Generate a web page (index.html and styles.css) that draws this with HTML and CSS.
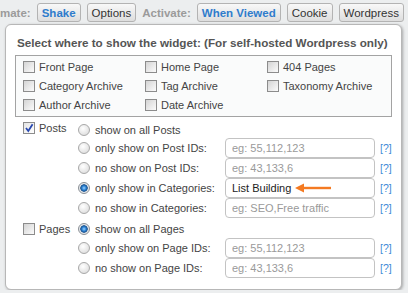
FILE: index.html
```html
<!DOCTYPE html>
<html lang="en">
<head>
  <meta charset="UTF-8">
  <title>Widget Display Rules</title>
  <link rel="stylesheet" href="styles.css">
</head>
<body>

<div class="toolbar">
  <span class="tb-label">mate:</span>
  <button class="tb-btn on">Shake</button>
  <button class="tb-btn">Options</button>
  <span class="tb-label">Activate:</span>
  <button class="tb-btn on">When Viewed</button>
  <button class="tb-btn">Cookie</button>
  <button class="tb-btn">Wordpress</button>
</div>

<div class="panel">
  <h3 class="panel-title">Select where to show the widget: (For self-hosted Wordpress only)</h3>

  <div class="page-types">
    <label class="check-item"><span class="cb"></span>Front Page</label>
    <label class="check-item"><span class="cb"></span>Home Page</label>
    <label class="check-item"><span class="cb"></span>404 Pages</label>
    <label class="check-item"><span class="cb"></span>Category Archive</label>
    <label class="check-item"><span class="cb"></span>Tag Archive</label>
    <label class="check-item"><span class="cb"></span>Taxonomy Archive</label>
    <label class="check-item"><span class="cb"></span>Author Archive</label>
    <label class="check-item"><span class="cb"></span>Date Archive</label>
  </div>

  <div class="rules rules-posts">
    <label class="rule-toggle">
      <span class="cb checked">
        <svg width="10" height="10" viewBox="0 0 10 10"><path d="M2 5 L4.3 8 L8.6 1.2" fill="none" stroke="#2848b0" stroke-width="1.8"/></svg>
      </span>Posts
    </label>
    <label class="radio-item"><span class="rb"></span>show on all Posts</label>

    <label class="radio-item"><span class="rb"></span>only show on Post IDs:</label>
    <div class="field"><input type="text" placeholder="eg: 55,112,123"></div>
    <a class="help">[?]</a>

    <label class="radio-item"><span class="rb"></span>no show on Post IDs:</label>
    <div class="field"><input type="text" placeholder="eg: 43,133,6"></div>
    <a class="help">[?]</a>

    <label class="radio-item"><span class="rb on"></span>only show in Categories:</label>
    <div class="field">
      <input type="text" value="List Building">
      <svg class="arrow" width="36" height="10" viewBox="0 0 36 10">
        <polygon points="0,5 9,0.5 9,9.5" fill="#f47a22"/>
        <rect x="8" y="3.8" width="28" height="2.4" fill="#f47a22"/>
      </svg>
    </div>
    <a class="help">[?]</a>

    <label class="radio-item"><span class="rb"></span>no show in Categories:</label>
    <div class="field"><input type="text" placeholder="eg: SEO,Free traffic"></div>
    <a class="help">[?]</a>
  </div>

  <div class="rules rules-pages">
    <label class="rule-toggle"><span class="cb"></span>Pages</label>
    <label class="radio-item"><span class="rb on"></span>show on all Pages</label>

    <label class="radio-item"><span class="rb"></span>only show on Page IDs:</label>
    <div class="field"><input type="text" placeholder="eg: 55,112,123"></div>
    <a class="help">[?]</a>

    <label class="radio-item"><span class="rb"></span>no show on Page IDs:</label>
    <div class="field"><input type="text" placeholder="eg: 43,133,6"></div>
    <a class="help">[?]</a>
  </div>
</div>

</body>
</html>
```

FILE: styles.css
```css
* {
  box-sizing: border-box;
}
body {
  margin: 0;
  background-color: #eceeef;
  font-family: "Liberation Sans", Arial, sans-serif;
  font-size: 11px;
  color: #444;
  overflow: hidden;
}
.toolbar {
  display: flex;
  align-items: center;
  gap: 6px;
  height: 24px;
  padding: 3px 0 2px;
}
.tb-label {
  font-size: 11.5px;
  font-weight: bold;
  color: #9b9b9b;
}
.tb-btn {
  height: 19px;
  padding: 0 4px;
  border: 1px solid #b3b3b3;
  border-radius: 3px;
  background: linear-gradient(#f8f8f8, #dedede);
  font-family: "Liberation Sans", Arial, sans-serif;
  font-size: 11.5px;
  color: #333;
}
.tb-btn.on {
  color: #2f7ccc;
  font-weight: bold;
}
.panel {
  width: 397px;
  height: 266px;
  margin-left: 5px;
  padding: 11px 9px 0;
  background-color: #fff;
  border: 1px solid #b7b7b7;
  border-radius: 6px;
  box-shadow: 1px 1px 3px rgba(0, 0, 0, 0.3);
}
.panel-title {
  margin: 0 0 5px 2px;
  font-size: 11.7px;
  line-height: 14px;
  font-weight: bold;
  color: #555;
}
.page-types {
  display: grid;
  grid-template-columns: repeat(3, 122px);
  grid-auto-rows: 19px;
  padding: 1px 0 2px 7px;
  border: 1px solid #a3a3a3;
  background-color: #fafbfb;
}
.check-item,
.rule-toggle {
  display: flex;
  align-items: center;
  gap: 4px;
}
.cb {
  flex: none;
  width: 12px;
  height: 12px;
  border: 1px solid #8c8c8c;
  background: linear-gradient(135deg, #d4d4d4, #fbfbfb);
  display: flex;
  align-items: center;
  justify-content: center;
}
.cb.checked {
  background: linear-gradient(135deg, #e4e4e4, #ffffff);
}
.rules {
  display: grid;
  grid-template-columns: 55px 147px 150px auto;
  align-items: center;
  padding-left: 8px;
}
.rules-posts {
  margin-top: 4px;
  grid-template-rows: 17px repeat(4, 20px);
}
.rules-posts .rule-toggle {
  align-self: start;
  margin-top: 1px;
}
.rules-pages {
  margin-top: 2px;
  grid-template-rows: 18px repeat(2, 20px);
}
.radio-item {
  grid-column: 2;
  display: flex;
  align-items: center;
  gap: 5px;
}
.rb {
  flex: none;
  width: 12px;
  height: 12px;
  border-radius: 50%;
  border: 1px solid #a8a8a8;
  background: radial-gradient(circle at 40% 35%, #ffffff, #d6d6d6);
}
.rb.on {
  border-color: #8a8f95;
  background: radial-gradient(circle at 50% 50%, #9fd4ff 0, #2c84d6 2px, #174f8c 3.4px, #dfe3e7 4px, #f0f0f0 6px);
}
.field {
  grid-column: 3;
  position: relative;
  height: 20px;
}
.field input {
  width: 150px;
  height: 20px;
  padding: 0 6px;
  border: 1px solid #c3c3c3;
  border-radius: 4px;
  font-family: "Liberation Sans", Arial, sans-serif;
  font-size: 11px;
  color: #222;
  outline: none;
}
.field input::placeholder {
  color: #9a9a9a;
}
.arrow {
  position: absolute;
  left: 70px;
  top: 5px;
}
.help {
  grid-column: 4;
  margin-left: 5px;
  font-size: 10.5px;
  color: #3d8ad6;
}
```
